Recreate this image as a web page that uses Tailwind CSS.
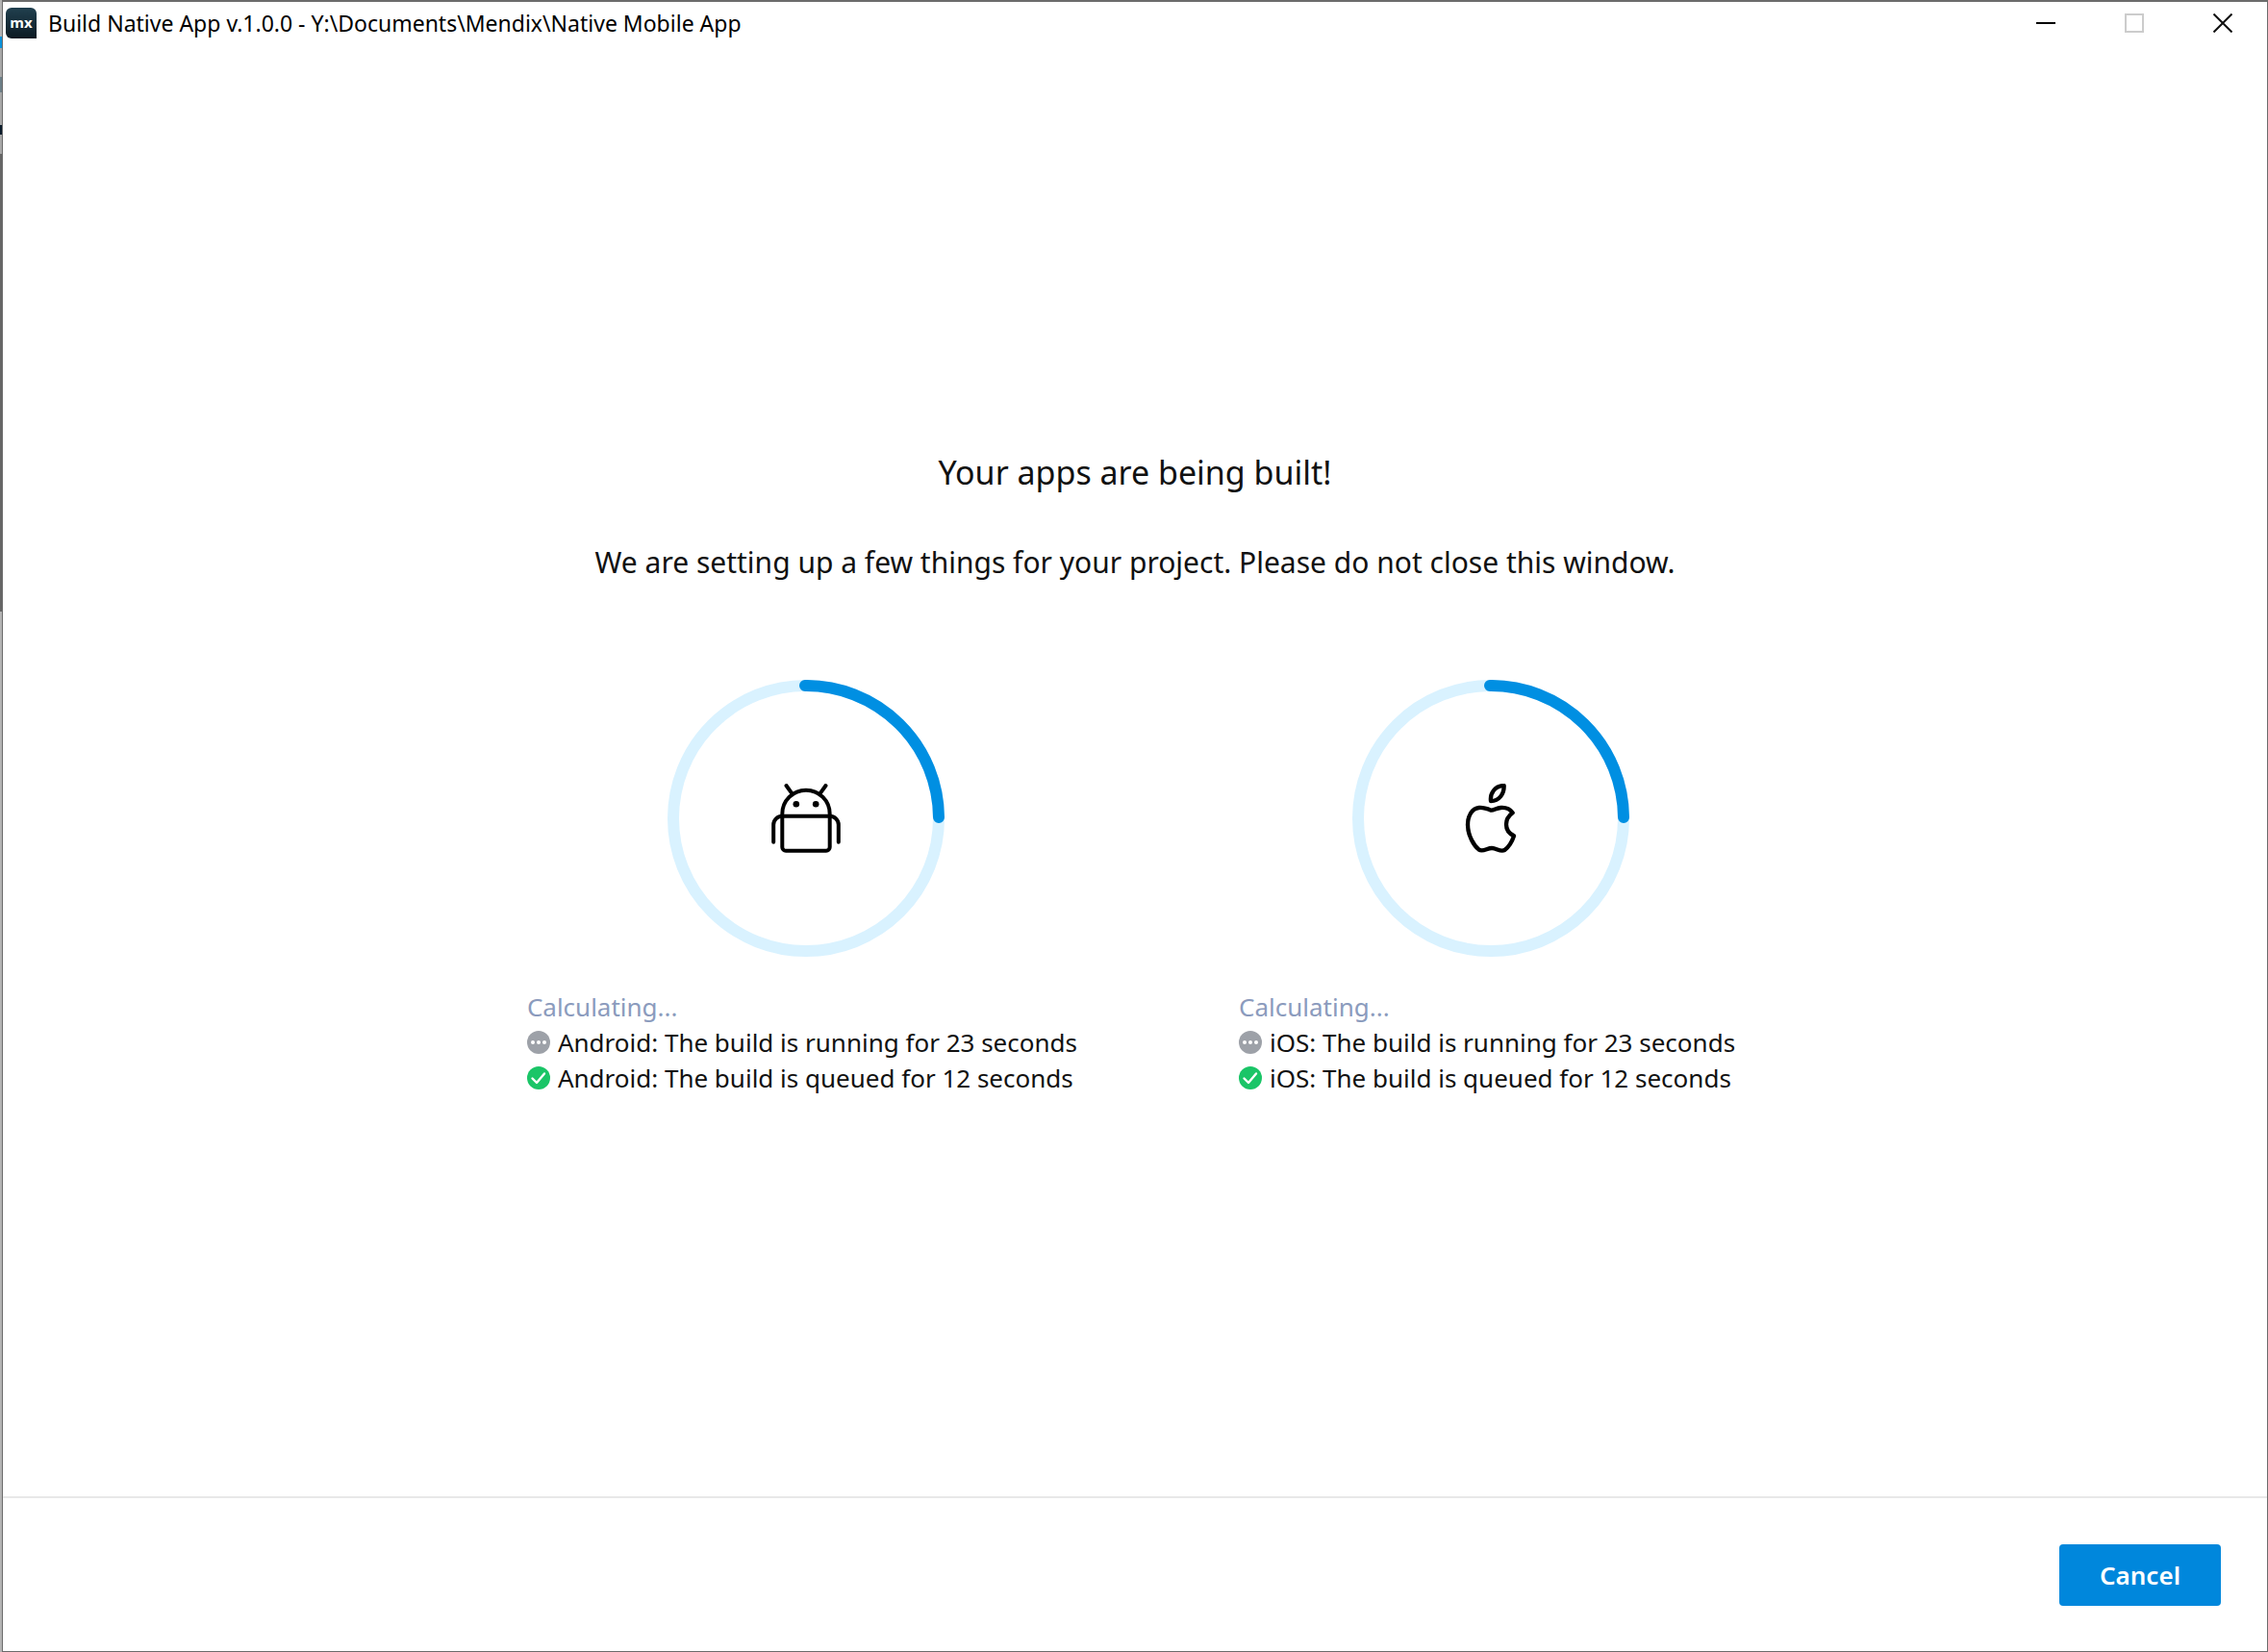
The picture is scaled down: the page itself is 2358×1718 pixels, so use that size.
<!DOCTYPE html>
<html lang="en">
<head>
<meta charset="utf-8">
<title>Build Native App</title>
<script src="https://cdn.jsdelivr.net/npm/@tailwindcss/browser@4"></script>
</head>
<body class="flex min-h-screen bg-[#8c8c8c] font-['Segoe_UI','Noto_Sans','Open_Sans',sans-serif] text-[#111]">
  <!-- Sliver of the desktop behind the window -->
  <div class="flex w-0.5 shrink-0 flex-col bg-[#b4b4b4]" aria-hidden="true">
    <div class="h-[38px] bg-[#b4b4b4]"></div>
    <div class="h-3 bg-[#0a93dc]"></div>
    <div class="h-[30px] bg-[#a8a8a8]"></div>
    <div class="h-4 bg-[#6d7f88]"></div>
    <div class="h-[34px] bg-[#a8a8a8]"></div>
    <div class="h-2.5 bg-[#0b1b2b]"></div>
    <div class="h-5 bg-[#a8a8a8]"></div>
    <div class="h-[476px] bg-[#666]"></div>
  </div>

  <div class="flex grow flex-col border border-t-2 border-[#6b6b6b] bg-white">
    <header class="flex h-11 items-center pl-[3px] pr-9">
      <svg class="size-8" viewBox="0 0 32 32" aria-hidden="true">
        <defs>
          <linearGradient id="logo" x1="0" y1="0" x2="0" y2="1">
            <stop offset="0" stop-color="#21404f"/>
            <stop offset="1" stop-color="#0b1a23"/>
          </linearGradient>
        </defs>
        <path d="M6 0h20a6 6 0 0 1 6 6v26H6a6 6 0 0 1-6-6V6a6 6 0 0 1 6-6z" fill="url(#logo)"/>
        <text x="16" y="21" text-anchor="middle" font-family="Open Sans, sans-serif" font-size="15" font-weight="700" fill="#fff">mx</text>
      </svg>
      <h1 class="ml-3 text-[23px] leading-8 text-black">Build Native App v.1.0.0 - Y:\Documents\Mendix\Native Mobile App</h1>
      <div class="ml-auto flex gap-18">
        <button class="size-5" aria-label="Minimize">
          <svg class="size-5" viewBox="0 0 20 20"><path d="M0 10h20" stroke="#000" stroke-width="2"/></svg>
        </button>
        <button class="size-5" aria-label="Maximize" disabled>
          <svg class="size-5" viewBox="0 0 20 20"><path d="M1 1h18v18H1z" fill="none" stroke="#ccc" stroke-width="2"/></svg>
        </button>
        <button class="size-5" aria-label="Close">
          <svg class="size-5" viewBox="0 0 20 20"><path d="M.5.5l19 19M19.5.5l-19 19" stroke="#111" stroke-width="2"/></svg>
        </button>
      </div>
    </header>

    <main class="flex grow flex-col items-center justify-center pt-1">
      <h2 class="text-[34px] leading-[48px]">Your apps are being built!</h2>
      <p class="mt-[50px] text-[30px] leading-10">We are setting up a few things for your project. Please do not close this window.</p>

      <div class="mt-[102px] flex gap-40">
        <section class="flex flex-col" aria-label="Android build">
          <div class="grid place-items-center self-center">
            <svg class="col-start-1 row-start-1 size-72" viewBox="0 0 288 288" fill="none" stroke-width="12" aria-hidden="true">
              <circle cx="144" cy="144" r="138" stroke="#d9f2ff"/>
              <path d="M143 6A138 138 0 0 1 282 143" stroke="#008fe2" stroke-linecap="round"/>
            </svg>
            <svg class="col-start-1 row-start-1 size-[72px]" viewBox="0 0 72 72" fill="none" stroke="#000" stroke-width="4" stroke-linecap="round" aria-hidden="true">
              <path d="M11.3 33.7V31.4a24.7 24.7 0 0 1 49.4 0V66a3.7 3.7 0 0 1-3.7 3.7H15a3.7 3.7 0 0 1-3.7-3.7zH60.7"/>
              <path d="M11.3 33.7c-5 0-9.1 4-9.1 9v18M60.7 33.7c5 0 9.1 4 9.1 9v18M15.5 2l6 8.3M56.5 2l-6 8.3"/>
              <circle cx="25.8" cy="21.2" r="3.3" fill="#000" stroke="none"/>
              <circle cx="46.2" cy="21.2" r="3.3" fill="#000" stroke="none"/>
            </svg>
          </div>
          <p class="mt-[34px] text-[26px] leading-[37px] text-[#8b9bbd]">Calculating...</p>
          <ul class="pr-2 text-[26px] leading-[37px]">
            <li class="flex items-center gap-2">
              <svg class="size-6" viewBox="0 0 24 24" fill="#fff" aria-hidden="true"><circle cx="12" cy="12" r="12" fill="#9da1a8"/><circle cx="6" cy="12" r="2"/><circle cx="12" cy="12" r="2"/><circle cx="18" cy="12" r="2"/></svg>
              Android: The build is running for 23 seconds
            </li>
            <li class="flex items-center gap-2">
              <svg class="size-6" viewBox="0 0 24 24" aria-hidden="true"><circle cx="12" cy="12" r="12" fill="#1ac567"/><path d="M5.5 12.5l4.5 4.5 8-9.5" fill="none" stroke="#fff" stroke-width="2.4" stroke-linecap="round" stroke-linejoin="round"/></svg>
              Android: The build is queued for 12 seconds
            </li>
          </ul>
        </section>

        <section class="flex flex-col" aria-label="iOS build">
          <div class="grid place-items-center self-center">
            <svg class="col-start-1 row-start-1 size-72" viewBox="0 0 288 288" fill="none" stroke-width="12" aria-hidden="true">
              <circle cx="144" cy="144" r="138" stroke="#d9f2ff"/>
              <path d="M143 6A138 138 0 0 1 282 143" stroke="#008fe2" stroke-linecap="round"/>
            </svg>
            <svg class="col-start-1 row-start-1 size-[72px]" viewBox="369 378 216 216" fill="none" stroke="#000" stroke-width="13" stroke-linejoin="round" aria-hidden="true">
              <path d="M518 384C490 384 474 408 477 432C503 432 519 410 518 384z"/>
              <path d="M478 461C458 453 450 452 440 453C418 455 405 478 405 506C405 540 425 572 440 584C452 592 466 579 480 579C495 579 507 592 520 585C532 576 544 556 549 541C532 533 525 519 525 505C525 489 534 477 545 469C535 455 520 452 508 453C495 454 488 460 478 461z"/>
            </svg>
          </div>
          <p class="mt-[34px] text-[26px] leading-[37px] text-[#8b9bbd]">Calculating...</p>
          <ul class="pr-2 text-[26px] leading-[37px]">
            <li class="flex items-center gap-2">
              <svg class="size-6" viewBox="0 0 24 24" fill="#fff" aria-hidden="true"><circle cx="12" cy="12" r="12" fill="#9da1a8"/><circle cx="6" cy="12" r="2"/><circle cx="12" cy="12" r="2"/><circle cx="18" cy="12" r="2"/></svg>
              iOS: The build is running for 23 seconds
            </li>
            <li class="flex items-center gap-2">
              <svg class="size-6" viewBox="0 0 24 24" aria-hidden="true"><circle cx="12" cy="12" r="12" fill="#1ac567"/><path d="M5.5 12.5l4.5 4.5 8-9.5" fill="none" stroke="#fff" stroke-width="2.4" stroke-linecap="round" stroke-linejoin="round"/></svg>
              iOS: The build is queued for 12 seconds
            </li>
          </ul>
        </section>
      </div>
    </main>

    <footer class="flex justify-end border-t-2 border-[#e8e8e8] px-12 pt-12 pb-[47px]">
      <button class="h-16 w-[168px] rounded bg-[#0087dc] text-[26px] font-semibold text-white">Cancel</button>
    </footer>
  </div>
</body>
</html>
